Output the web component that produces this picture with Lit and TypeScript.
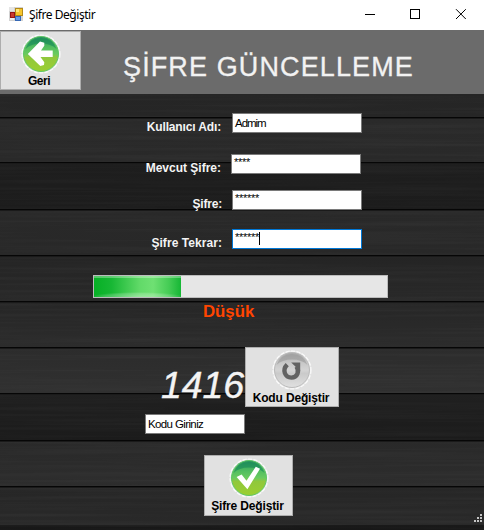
import { LitElement, html, svg, css } from "lit";
import { customElement, property } from "lit/decorators.js";

@customElement("icon-button")
class IconButton extends LitElement {
  @property() label = "";
  @property() icon = "back";

  static styles = css`
    :host { display: block; box-sizing: border-box; }
    .button {
      box-sizing: border-box; width: 100%; height: 100%; padding: 0; margin: 0;
      display: flex; flex-direction: column; align-items: center;
      background: #e1e1e1; border: 1px solid #adadad; border-radius: 0;
      font: bold 12px/14px "Liberation Sans", Arial, sans-serif; color: #000;
      letter-spacing: -0.15px; white-space: nowrap;
    }
    .icon { display: block; width: 40px; height: 40px; margin-top: 2px; flex: none; }
    .caption { margin-top: 1px; }
    .caption.back { letter-spacing: -0.45px; margin: 0 3px 0 0; }
    .caption.refresh { margin-right: 2px; }
    .caption.check { margin-right: 2px; }
  `;

  glyph() {
    if (this.icon === "back")
      return svg`<path d="M6.8 20 19 7.4 23.3 8.7 23.3 11.8 20 16.6H31.7V23H19.5L23.3 28.2 23 31 19.3 32Z" fill="#fff"/>`;
    if (this.icon === "check")
      return svg`<path d="M7.6 19 12.6 16.6 17.5 22.7 26.8 8.8 31 10.8 18.4 31.2Z" fill="#fff"/>`;
    return svg`<path d="M15.2 14.6C9.8 20 13 27.6 19.4 27.6 25.4 27.6 27.8 21.5 24.4 16.6" fill="none" stroke="#626262" stroke-width="4.4"/><path d="M19.2 12.4H28.2V21.2Z" fill="#626262"/>`;
  }

  render() {
    const grey = this.icon === "refresh";
    return html`<button class="button">
      <svg class="icon" viewBox="0 0 40 40">
        <defs>
          <linearGradient id="ball" x1="0" y1="0" x2="0" y2="1">
            <stop offset="0" stop-color=${grey ? "#a9a9a9" : "#24915e"}></stop>
            <stop offset=".3" stop-color=${grey ? "#c8c8c8" : "#52be60"}></stop>
            <stop offset=".5" stop-color=${grey ? "#d4d4d4" : "#6acb60"}></stop>
            <stop offset=".6" stop-color=${grey ? "#cacaca" : "#90c83c"}></stop>
            <stop offset="1" stop-color=${grey ? "#e0e0e0" : "#9bcf30"}></stop>
          </linearGradient>
        </defs>
        <circle cx="20" cy="20" r="19" fill="#ededed" stroke="#fafafa" stroke-width="1.2" stroke-dasharray="4 1.5"></circle>
        <circle cx="20" cy="20" r="17.5" fill="url(#ball)" stroke=${grey ? "#bbbbbb" : "#5fc765"} stroke-width="1"></circle>
        <path d="M4.5 15Q8 4.4 20 4 32 4.4 35.5 15 30 9.5 20 9.5 10 9.5 4.5 15Z" fill=${grey ? "#999" : "#188858"} opacity=".6"></path>
        ${this.glyph()}
      </svg>
      <span class="caption ${this.icon}">${this.label}</span>
    </button>`;
  }
}

@customElement("app-root")
class AppRoot extends LitElement {
  static styles = css`
    :host { display: block; width: 484px; height: 530px; overflow: hidden; font-family: "Liberation Sans", Arial, sans-serif; }
    .window { width: 484px; height: 530px; display: flex; flex-direction: column; }
    .titlebar { height: 30px; flex: none; background: #fff; display: flex; align-items: center; box-sizing: border-box; padding-left: 9px; }
    .app-icon { width: 14px; height: 14px; margin-top: -2px; flex: none; }
    .caption { margin-left: 6px; font: 12px/16px "Noto Sans", "Open Sans", sans-serif; letter-spacing: -0.45px; color: #000; flex: 1; white-space: nowrap; }
    .controls { width: 138px; height: 30px; flex: none; }
    .banner { height: 64px; flex: none; background: #6b6b6b; display: flex; }
    .back { width: 81px; height: 59px; margin-top: 1px; flex: none; }
    .heading { margin: 21px 0 0 42px; font-size: 27px; line-height: 32px; font-weight: 400; letter-spacing: 1.12px; color: #f2f2f2; -webkit-text-stroke: 0.3px #f2f2f2; white-space: nowrap; }
    .body { height: 436px; position: relative; }
    .wood { position: absolute; inset: 0; width: 484px; height: 436px; }
    .content { position: relative; display: flex; flex-direction: column; height: 436px; }
    .row { display: flex; height: 20px; }
    .row.name { margin-top: 19px; }
    .row.current { margin-top: 21px; }
    .row.fresh { margin-top: 16px; }
    .row.repeat { margin-top: 19px; }
    .label { width: 222px; text-align: right; flex: none; font-size: 12px; line-height: 14px; font-weight: bold; color: #f4f4f4; letter-spacing: 0.06px; margin: 7px 10px 0 0; white-space: nowrap; }
    .name .label { width: 221px; margin-right: 11px; letter-spacing: -0.14px; }
    .current .label { width: 221px; letter-spacing: 0; }
    .fresh .label { letter-spacing: -0.2px; }
    .field { box-sizing: border-box; width: 130px; height: 20px; flex: none; border: 1px solid #7a7a7a; background: #fff; color: #000; font-size: 11.5px; line-height: 14px; padding: 2px 0 0 2px; letter-spacing: -1.02px; white-space: nowrap; display: flex; }
    .secret { font-size: 11px; letter-spacing: -0.28px; padding-top: 0; }
    .focused { border-color: #0078d7; }
    .caret { width: 1px; height: 13px; margin-top: 2px; background: #000; }
    .meter { box-sizing: border-box; width: 295px; height: 23px; margin: 26px 0 0 93px; border: 1px solid #bcbcbc; background: #e6e6e6; flex: none; }
    .fill { height: 21px; background:
      linear-gradient(to bottom, rgba(255,255,255,.3) 0 2px, transparent 2px),
      radial-gradient(ellipse 46px 5px at 50% 100%, rgba(255,255,255,.36), rgba(255,255,255,.2) 70%, transparent),
      linear-gradient(to right, #06b025 0, #17b734 20%, #62da69 53%, #6fe073 68%, #45cc55 86%, #16b735 100%); }
    .strength { margin: 4px 0 0 203px; font-size: 16.8px; line-height: 20px; font-weight: bold; color: #ff4500; height: 20px; flex: none; }
    .verify { display: flex; margin: 25px 0 0 145px; height: 87px; flex: none; }
    .code { width: 100px; flex: none; display: flex; flex-direction: column; }
    .digits { height: 67px; box-sizing: border-box; padding: 17px 0 0 16px; font-size: 37.5px; line-height: 42px; font-style: italic; color: #f4f4f4; letter-spacing: -0.1px; -webkit-text-stroke: 0.4px #f4f4f4; white-space: nowrap; }
    .entry { width: 100px; letter-spacing: -0.62px; }
    .change { width: 94px; height: 60px; flex: none; }
    .submit { width: 89px; height: 61px; margin: 21px 0 0 204px; flex: none; }
    .grip { position: absolute; right: 2px; bottom: 8px; width: 8px; height: 8px; }
  `;

  planks = [
    [0, 23, "#252525", "#262626"],
    [23, 45, "#2a2a2a", "#292929"],
    [68, 47, "#1e1e1e", "#1c1c1c"],
    [115, 46, "#292929", "#282828"],
    [161, 46, "#242424", "#292929"],
    [207, 46, "#262626", "#2c2c2c"],
    [253, 46, "#2c2c2c", "#303030"],
    [299, 47, "#202020", "#1b1b1b"],
    [346, 46, "#292929", "#2d2d2d"],
    [392, 39, "#262626", "#292929"],
    [431, 5, "#191919", "#171717"],
  ] as const;

  render() {
    return html`<div class="window">
      <header class="titlebar">
        <svg class="app-icon" viewBox="0 0 14 14" shape-rendering="crispEdges">
          <rect x="0" y="0" width="14" height="14" fill="#d2d2d2"></rect>
          <rect x="6" y="1" width="7" height="7" fill="#f6c52d" stroke="#b58a16"></rect>
          <rect x="7" y="2" width="3" height="3" fill="#ffe77d"></rect>
          <rect x="1" y="5" width="4" height="5" fill="#c93930" stroke="#951515"></rect>
          <rect x="6" y="9" width="5" height="4" fill="#659be9" stroke="#3668b5"></rect>
          <rect x="1" y="11" width="4" height="2" fill="#eee"></rect>
          <rect x="0" y="0" width="5" height="4" fill="#e5e5e5"></rect>
        </svg>
        <span class="caption">Şifre Değiştir</span>
        <svg class="controls" viewBox="0 0 138 30" fill="none" stroke="#000">
          <path d="M19 14.5H29M64.5 9.5H73.5V18.5H64.5Z" shape-rendering="crispEdges"></path>
          <path d="M110 9.2 119.8 19M119.8 9.2 110 19"></path>
        </svg>
      </header>
      <section class="banner">
        <icon-button class="back" icon="back" label="Geri"></icon-button>
        <h1 class="heading">ŞİFRE GÜNCELLEME</h1>
      </section>
      <main class="body">
        <svg class="wood" viewBox="0 0 484 436">
          <defs>
            <filter id="grain" x="0" y="0" width="100%" height="100%" color-interpolation-filters="sRGB">
              <feTurbulence type="fractalNoise" baseFrequency="0.004 0.3" numOctaves="2" seed="4"></feTurbulence>
              <feColorMatrix values="0 0 0 0 1  0 0 0 0 1  0 0 0 0 1  .07 0 0 0 -.03"></feColorMatrix>
            </filter>
            ${this.planks.map(([, , a, b], i) => svg`<linearGradient id=${"p" + i} x1="0" y1="0" x2="0" y2="1"><stop offset="0" stop-color=${a}/><stop offset="1" stop-color=${b}/></linearGradient>`)}
          </defs>
          ${this.planks.map(([y, h], i) => svg`<rect x="0" y=${y} width="484" height=${h} fill=${`url(#p${i})`}/>`)}
          <rect width="484" height="436" filter="url(#grain)"></rect>
          ${this.planks.slice(1, 10).map(([y]) => svg`<rect x="0" y=${y} width="484" height="1" fill="#060606"/><rect x="0" y=${y + 1} width="484" height="1" fill="#1a1a1a"/>`)}
        </svg>
        <div class="content">
          <div class="row name"><span class="label">Kullanıcı Adı:</span><div class="field">Admim</div></div>
          <div class="row current"><span class="label">Mevcut Şifre:</span><div class="field secret">****</div></div>
          <div class="row fresh"><span class="label">Şifre:</span><div class="field secret">******</div></div>
          <div class="row repeat"><span class="label">Şifre Tekrar:</span><div class="field secret focused">******<span class="caret"></span></div></div>
          <div class="meter"><div class="fill" style="width:${(87 / 293) * 100}%"></div></div>
          <div class="strength">Düşük</div>
          <div class="verify">
            <div class="code"><div class="digits">1416</div><div class="field entry">Kodu Giriniz</div></div>
            <icon-button class="change" icon="refresh" label="Kodu Değiştir"></icon-button>
          </div>
          <icon-button class="submit" icon="check" label="Şifre Değiştir"></icon-button>
        </div>
        <svg class="grip" viewBox="0 0 8 8" fill="#c4c4c4" shape-rendering="crispEdges">
          <path d="M6 0h2v2H6zM3 3h2v2H3zM6 3h2v2H6zM0 6h2v2H0zM3 6h2v2H3zM6 6h2v2H6z"></path>
        </svg>
      </main>
    </div>`;
  }
}
